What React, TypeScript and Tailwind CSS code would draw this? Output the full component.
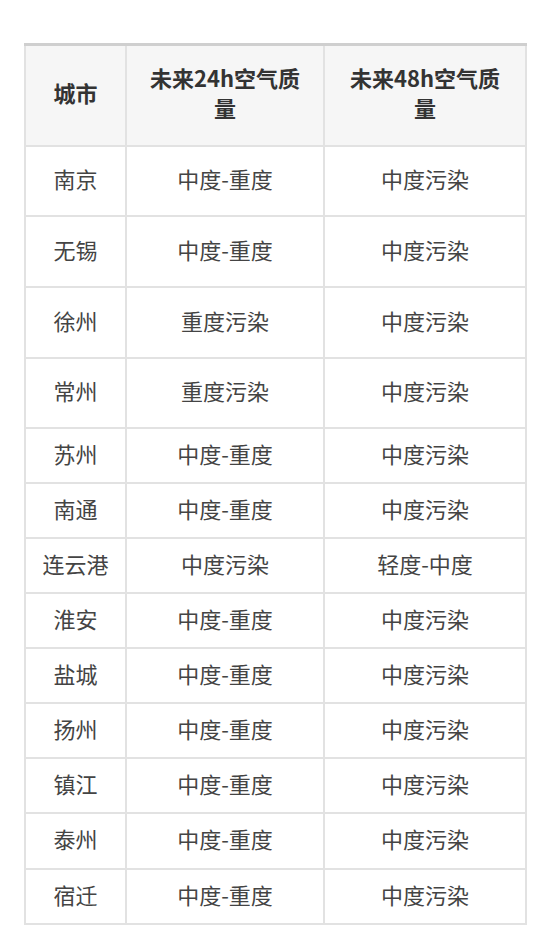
const rows: [string, string, string, number][] = [
  ["南京", "中度-重度", "中度污染", 70],
  ["无锡", "中度-重度", "中度污染", 71],
  ["徐州", "重度污染", "中度污染", 71],
  ["常州", "重度污染", "中度污染", 70],
  ["苏州", "中度-重度", "中度污染", 55],
  ["南通", "中度-重度", "中度污染", 55],
  ["连云港", "中度污染", "轻度-中度", 55],
  ["淮安", "中度-重度", "中度污染", 55],
  ["盐城", "中度-重度", "中度污染", 55],
  ["扬州", "中度-重度", "中度污染", 55],
  ["镇江", "中度-重度", "中度污染", 55],
  ["泰州", "中度-重度", "中度污染", 56],
  ["宿迁", "中度-重度", "中度污染", 55],
];

export default function App() {
  return (
    <div
      className="w-[550px] h-[939px] bg-white pt-[43px] pl-[24px]"
      style={{ fontFamily: '"Noto Sans CJK SC", "Noto Sans", sans-serif' }}
    >
      <table className="w-[501px] border-collapse table-fixed border-t-[3px] border-t-[#cfcfcf]">
        <colgroup>
          <col className="w-[101px]" />
          <col className="w-[198px]" />
          <col className="w-[202px]" />
        </colgroup>
        <thead>
          <tr className="h-[101px] bg-[#f6f6f6]">
            <th className="border-2 border-[#e2e2e2] border-t-0 px-3 pb-[6px] text-[22px] leading-[30px] font-bold text-[#333]">
              城市
            </th>
            <th className="border-2 border-[#e2e2e2] border-t-0 px-5 pb-[6px] text-[22px] leading-[30px] font-bold text-[#333]">
              未来24h空气质量
            </th>
            <th className="border-2 border-[#e2e2e2] border-t-0 px-5 pb-[6px] text-[22px] leading-[30px] font-bold text-[#333]">
              未来48h空气质量
            </th>
          </tr>
        </thead>
        <tbody>
          {rows.map(([city, a, b, h]) => (
            <tr key={city} style={{ height: h }}>
              <td className="border-2 border-[#e2e2e2] pb-1 text-center text-[22px] text-[#444]">
                {city}
              </td>
              <td className="border-2 border-[#e2e2e2] pb-1 text-center text-[22px] text-[#444]">
                {a}
              </td>
              <td className="border-2 border-[#e2e2e2] pb-1 text-center text-[22px] text-[#444]">
                {b}
              </td>
            </tr>
          ))}
        </tbody>
      </table>
    </div>
  );
}
